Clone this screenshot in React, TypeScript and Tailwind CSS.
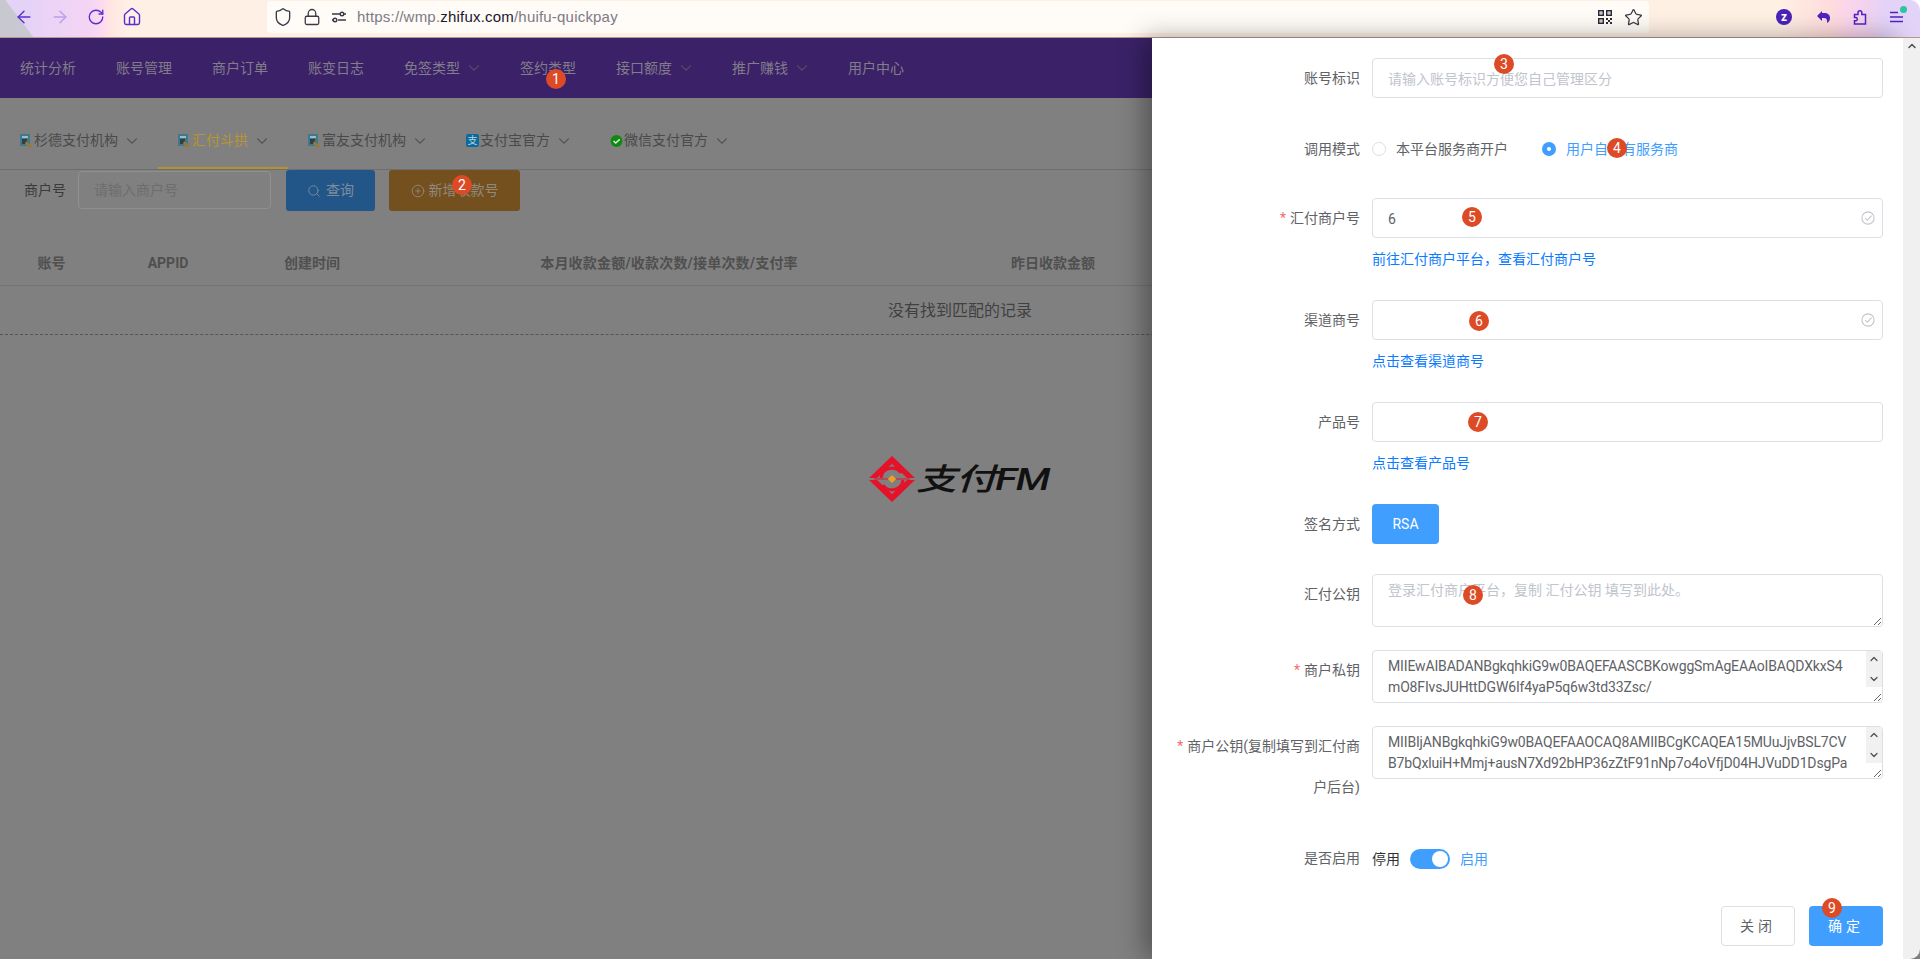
import {
  ArrowLeft,
  ArrowRight,
  ChevronDown,
  ChevronUp,
  CirclePlus,
  House,
  Lock,
  RotateCw,
  Search,
  Shield,
  Star,
} from "lucide-react";
import type { ReactNode } from "react";

const navItems = [
  { label: "统计分析" },
  { label: "账号管理" },
  { label: "商户订单" },
  { label: "账变日志" },
  { label: "免签类型", arrow: true },
  { label: "签约类型" },
  { label: "接口额度", arrow: true },
  { label: "推广赚钱", arrow: true },
  { label: "用户中心" },
];

const badges = [
  { n: 1, pos: "left-[546px] top-[69px]" },
  { n: 2, pos: "left-[452px] top-[175px]" },
  { n: 3, pos: "left-[1494px] top-[54px]" },
  { n: 4, pos: "left-[1607px] top-[138px]" },
  { n: 5, pos: "left-[1462px] top-[207px]" },
  { n: 6, pos: "left-[1469px] top-[311px]" },
  { n: 7, pos: "left-[1468px] top-[412px]" },
  { n: 8, pos: "left-[1463px] top-[585px]" },
  { n: 9, pos: "left-[1822px] top-[898px]" },
];

function TileIcon() {
  return (
    <svg viewBox="0 0 14 14" className="h-[14px] w-[14px] shrink-0">
      <rect x="0" y="0" width="10" height="12" fill="#41788a" />
      <rect x="2" y="2" width="6" height="2" fill="#9fbcc4" />
      <rect x="2" y="5" width="5" height="5" fill="#2f3f45" />
      <path d="M6 7l6 5-2 2-5-4z" fill="#957a38" />
    </svg>
  );
}

function AlipayIcon() {
  return (
    <span className="mr-[1px] flex h-[13px] w-[13px] shrink-0 items-center justify-center rounded-[2px] bg-[#0c6a9c] text-[10px] leading-none text-[#bcd4e0]">
      支
    </span>
  );
}

function WechatIcon() {
  return (
    <svg viewBox="0 0 14 14" className="h-[14px] w-[14px] shrink-0">
      <circle cx="6.5" cy="7" r="6" fill="#0f8a10" />
      <path d="M3.5 7l2.2 2 4-3.6" fill="none" stroke="#d8e8d8" strokeWidth="1.6" />
    </svg>
  );
}

function Chevron({ className }: { className: string }) {
  return <ChevronDown className={"ml-[5px] mr-[-4px] h-[18px] w-[18px] " + className} strokeWidth={1.5} />;
}

function Tab({ icon, label, active }: { icon: ReactNode; label: string; active?: boolean }) {
  return (
    <div
      className={
        "flex h-[71px] items-center pl-5 pr-[21px] pt-4 text-[14px] border-b-2 " +
        (active ? "border-[#b39232] text-[#b8962f]" : "border-transparent text-[#4a4a4a]")
      }
    >
      {icon}
      <span>{label}</span>
      <Chevron className="text-[#555555]" />
    </div>
  );
}

function BrowserBar() {
  return (
    <header className="flex h-[38px] items-start rounded-tr-[10px] border-b border-[#b39a8c] bg-[linear-gradient(53deg,#c8c8d0_26px,transparent_27px),linear-gradient(90deg,#e5d3f7_30px,#f5d4f5_90px,#ffdcee_105px,#ffe6e0_110px,#fff0e6_130px,#fff0e4_1780px,#ffdcdc_1830px,#fad5ec_1850px,#f0d2f0_1870px,#e3d3f8_1885px)]">
      <div className="flex h-[34px] w-[267px] items-center pl-[14px] text-[#5a2fd0]">
        <ArrowLeft className="h-5 w-5" strokeWidth={1.7} />
        <ArrowRight className="ml-4 h-5 w-5 text-[#b9a0ea]" strokeWidth={1.7} />
        <RotateCw className="ml-[17px] h-[18px] w-[18px]" strokeWidth={1.8} />
        <House className="ml-[17px] h-5 w-5" strokeWidth={1.7} />
      </div>
      <div className="mt-px flex h-[32px] w-[1382px] items-center rounded-[4px] bg-[#fffbf7] pl-[6px] text-[#3a3a48]">
        <Shield className="h-5 w-5" strokeWidth={1.6} />
        <Lock className="ml-[10px] h-[18px] w-[18px]" strokeWidth={1.7} />
        <svg viewBox="0 0 16 16" className="ml-[10px] h-4 w-4" fill="none" stroke="currentColor" strokeWidth="1.4">
          <path d="M1 5h8M13 5h2M7 11h8M1 11h1" />
          <circle cx="11" cy="5" r="1.8" />
          <circle cx="4" cy="11" r="1.8" />
        </svg>
        <div className="ml-[10px] font-['Liberation_Sans',sans-serif] text-[15px] tracking-[0.2px] text-[#7d7a86]">
          https://wmp.<span className="text-[#1b1730]">zhifux.com</span>/huifu-quickpay
        </div>
        <div className="ml-auto flex items-center pr-[6px]">
          <svg viewBox="0 0 14 14" className="h-[14px] w-[14px]" fill="#2a2a38">
            <path d="M0 0h6v6H0zM8 0h6v6H8zM0 8h6v6H0z" />
            <path d="M1.5 1.5h3v3h-3zM9.5 1.5h3v3h-3zM1.5 9.5h3v3h-3z" fill="#fffbf7" />
            <path d="M2.5 2.5h1v1h-1zM10.5 2.5h1v1h-1zM2.5 10.5h1v1h-1zM8 8h2v2H8zM12 8h2v2h-2zM10 10h2v2h-2zM8 12h2v2H8zM12 12h2v2h-2z" />
          </svg>
          <Star className="ml-3 h-[19px] w-[19px]" strokeWidth={1.6} />
        </div>
      </div>
      <div className="relative flex h-[34px] flex-1 items-center text-[#4f24c4]">
        <span className="ml-[127px] flex h-4 w-4 items-center justify-center rounded-full bg-[#4b22b8] text-[12px] font-bold leading-none text-white">
          z
        </span>
        <svg viewBox="0 0 14 14" className="ml-6 h-[14px] w-[14px]" fill="currentColor">
          <path d="M6 1 1 6l5 5V8h2c2 0 3 1 3 3v2c2-1 3-3 3-5 0-3-2-5-6-5H6z" />
        </svg>
        <svg viewBox="0 0 16 16" className="ml-[22px] h-4 w-4" fill="none" stroke="currentColor" strokeWidth="1.5">
          <path d="M2.5 5.5h3.5V3.6a1.9 1.9 0 1 1 3.8 0v1.9h3.7v9.5H2.5v-3.2h1.2a1.6 1.6 0 0 0 0-3.2H2.5z" />
        </svg>
        <svg viewBox="0 0 14 12" className="ml-[22px] h-3 w-[14px]" fill="none" stroke="currentColor" strokeWidth="1.5">
          <path d="M0 1.5h8M0 6h13M0 10.5h13" />
        </svg>
        <span className="absolute left-[251px] top-[6px] h-[7px] w-[7px] rounded-full bg-[#2ec4a0]" />
      </div>
    </header>
  );
}

function PageBehind() {
  return (
    <div className="h-full bg-[#808080]">
      <nav className="flex h-[60px] items-center bg-[#3b2268] text-[14px] text-[#827d8a]">
        {navItems.map((item) => (
          <div key={item.label} className={"flex items-center pl-5 " + (item.arrow ? "pr-[21px]" : "pr-5")}>
            <span>{item.label}</span>
            {item.arrow && <Chevron className="text-[#524a68]" />}
          </div>
        ))}
      </nav>

      <div className="flex h-[72px] border-b border-[#6e6e6e]">
        <Tab icon={<TileIcon />} label="杉德支付机构" />
        <Tab icon={<TileIcon />} label="汇付斗拱" active />
        <Tab icon={<TileIcon />} label="富友支付机构" />
        <Tab icon={<AlipayIcon />} label="支付宝官方" />
        <Tab icon={<WechatIcon />} label="微信支付官方" />
      </div>

      <div className="flex h-[60px] items-start pl-6 text-[14px]">
        <label className="mt-[1px] leading-[38px] text-[#3a3a3a]">商户号</label>
        <div className="ml-3 mt-px flex h-[38px] w-[193px] items-center rounded-[4px] border border-[#909090] pl-[15px] text-[#6d6d6d]">
          请输入商户号
        </div>
        <button className="ml-[15px] flex h-[41px] w-[89px] items-center justify-center gap-[5px] rounded-[3px] bg-[#235688] text-[#7f8d9b]">
          <Search className="h-[14px] w-[14px]" strokeWidth={1.5} />
          查询
        </button>
        <button className="ml-[14px] flex h-[41px] w-[131px] items-center justify-center gap-1 rounded-[3px] bg-[#74501f] text-[#918a7c]">
          <CirclePlus className="h-[14px] w-[14px]" strokeWidth={1.5} />
          新增收款号
        </button>
      </div>

      <div className="flex h-[56px] items-center border-b border-[#747474] pt-[11px] text-[14px] font-bold text-[#4f4f4f]">
        <div className="w-[103px] text-center">账号</div>
        <div className="w-[130px] text-center">APPID</div>
        <div className="w-[158px] text-center">创建时间</div>
        <div className="w-[556px] text-center tracking-[0.2px]">本月收款金额/收款次数/接单次数/支付率</div>
        <div className="w-[212px] text-center">昨日收款金额</div>
      </div>
      <div className="h-[49px] border-b border-dashed border-[#555555] pt-[13px] text-center text-[16px] leading-[24px] text-[#404040]">
        没有找到匹配的记录
      </div>
    </div>
  );
}

function Watermark() {
  return (
    <div className="absolute left-[869px] top-[418px] flex items-center">
      <svg viewBox="0 0 46 46" className="h-[46px] w-[46px]">
        <path d="M23 0 46 22H38L23 8 8 22H0Z" fill="#e5122a" />
        <path d="M0 24H8L23 38 38 24H46L23 46Z" fill="#e5122a" />
        <path d="M12 22a11 11 0 0 1 20-5" fill="none" stroke="#e5122a" strokeWidth="3" />
        <path d="M34 24a11 11 0 0 1-20 5" fill="none" stroke="#e5122a" strokeWidth="3" />
        <path d="M5 23h14M27 23h14" stroke="#e5122a" strokeWidth="1" />
        <path d="M23 19l4 4-4 4-4-4z" fill="#f0a020" />
      </svg>
      <div className="ml-px origin-left scale-x-[1.2] scale-y-[0.9] text-[34px] font-medium italic leading-none tracking-[-1px] text-[#111111]">
        支付FM
      </div>
    </div>
  );
}

function FormRow({ label, required, className, children }: { label: ReactNode; required?: boolean; className?: string; children: ReactNode }) {
  return (
    <div className={"flex items-start " + (className ?? "")}>
      <label className="mb-[-1px] w-[208px] shrink-0 text-right leading-[41px] text-[#606266]">
        {required && <span className="mr-[4px] text-[#f56c6c]">*</span>}
        {label}
      </label>
      <div className="ml-3 w-[511px]">{children}</div>
    </div>
  );
}

function TextInput({ placeholder, value, check }: { placeholder?: string; value?: string; check?: boolean }) {
  return (
    <div className="relative">
      <input
        readOnly
        placeholder={placeholder}
        value={value ?? ""}
        className="h-10 w-full rounded-[4px] border border-[#dcdfe6] bg-white px-[15px] pt-px text-[14px] text-[#606266] outline-none placeholder:text-[#c0c4cc]"
      />
      {check && (
        <svg viewBox="0 0 24 24" className="absolute right-[8px] top-[13px] h-[14px] w-[14px] text-[#c0c4cc]" fill="none" stroke="currentColor" strokeWidth="1.8">
          <circle cx="12" cy="12" r="10.5" />
          <path d="M7 12l4 4 7-8" />
        </svg>
      )}
    </div>
  );
}

function KeyArea({ value, placeholder, bar }: { value?: string; placeholder?: string; bar?: boolean }) {
  return (
    <div className="relative h-[53px]">
      <textarea
        readOnly
        wrap="off"
        placeholder={placeholder}
        value={value ?? ""}
        className="h-[53px] w-full resize-y overflow-hidden rounded-[4px] border border-[#dcdfe6] bg-white px-[15px] py-[5px] text-[14px] leading-[21px] tracking-[-0.15px] text-[#606266] outline-none placeholder:text-[#c0c4cc] placeholder:tracking-normal"
      />
      {bar && (
        <div className="absolute right-px top-px flex h-[36px] w-4 flex-col items-center justify-between bg-[#f1f1f1] py-[2px] text-[#505050]">
          <ChevronUp className="h-3 w-3" strokeWidth={2.5} />
          <ChevronDown className="h-3 w-3" strokeWidth={2.5} />
        </div>
      )}
    </div>
  );
}

function LinkRow({ children }: { children: ReactNode }) {
  return <a className="mt-[11px] block h-5 leading-5 text-[#0a7bff]">{children}</a>;
}

function Drawer() {
  return (
    <aside className="absolute bottom-0 left-[1152px] top-0 w-[751px] bg-white pt-5 text-[14px] shadow-[-8px_0_24px_rgba(0,0,0,0.35)]">
      <FormRow label="账号标识">
        <TextInput placeholder="请输入账号标识方便您自己管理区分" />
      </FormRow>

      <FormRow label="调用模式" className="mt-[31px]">
        <div className="flex h-10 items-center">
          <span className="h-[14px] w-[14px] rounded-full border border-[#dcdfe6]" />
          <span className="ml-[10px] text-[#606266]">本平台服务商开户</span>
          <span className="ml-[34px] flex h-[14px] w-[14px] items-center justify-center rounded-full bg-[#409eff]">
            <span className="h-1 w-1 rounded-full bg-white" />
          </span>
          <span className="ml-[10px] text-[#409eff]">用户自己有服务商</span>
        </div>
      </FormRow>

      <FormRow label="汇付商户号" required className="mt-[29px]">
        <TextInput value="6" check />
        <LinkRow>前往汇付商户平台，查看汇付商户号</LinkRow>
      </FormRow>

      <FormRow label="渠道商号" className="mt-[31px]">
        <TextInput check />
        <LinkRow>点击查看渠道商号</LinkRow>
      </FormRow>

      <FormRow label="产品号" className="mt-[31px]">
        <TextInput />
        <LinkRow>点击查看产品号</LinkRow>
      </FormRow>

      <FormRow label="签名方式" className="mt-[31px]">
        <button className="h-10 w-[67px] rounded-[4px] bg-[#409eff] text-white">RSA</button>
      </FormRow>

      <FormRow label="汇付公钥" className="mt-[30px]">
        <KeyArea placeholder="登录汇付商户平台，复制 汇付公钥 填写到此处。" />
      </FormRow>

      <FormRow label="商户私钥" required className="mt-[23px]">
        <KeyArea bar value={"MIIEwAIBADANBgkqhkiG9w0BAQEFAASCBKowggSmAgEAAoIBAQDXkxS4\nmO8FIvsJUHttDGW6If4yaP5q6w3td33Zsc/"} />
      </FormRow>

      <FormRow
        label={
          <>
            商户公钥(复制填写到汇付商
            <br />
            户后台)
          </>
        }
        required
        className="mt-[23px]"
      >
        <KeyArea bar value={"MIIBIjANBgkqhkiG9w0BAQEFAAOCAQ8AMIIBCgKCAQEA15MUuJjvBSL7CV\nB7bQxluiH+Mmj+ausN7Xd92bHP36zZtF91nNp7o4oVfjD04HJVuDD1DsgPa"} />
      </FormRow>

      <FormRow label="是否启用" className="mt-[31px]">
        <div className="flex h-10 items-center pt-[2px]">
          <span className="text-[#303133]">停用</span>
          <span className="ml-[10px] flex h-5 w-10 items-center justify-end rounded-full bg-[#409eff] pr-[2px]">
            <span className="h-4 w-4 rounded-full bg-white" />
          </span>
          <span className="ml-[10px] text-[#409eff]">启用</span>
        </div>
      </FormRow>

      <div className="mt-[28px] flex justify-end gap-[14px] pr-5">
        <button className="h-10 w-[74px] rounded-[4px] border border-[#dcdfe6] bg-white tracking-[4px] text-[#606266]">关闭</button>
        <button className="h-10 w-[74px] rounded-[4px] bg-[#409eff] tracking-[4px] text-white">确定</button>
      </div>
    </aside>
  );
}

export default function App() {
  return (
    <div className="relative h-[959px] w-[1920px] overflow-hidden bg-white font-['Roboto','Noto_Sans_CJK_SC',sans-serif]">
      <BrowserBar />
      <div className="relative h-[921px]">
        <PageBehind />
        <Watermark />
        <Drawer />
        <div className="absolute bottom-0 right-0 top-0 w-[17px] rounded-br-[10px] bg-[#f0f0f0] pt-[2px] text-[#505050]">
          <ChevronUp className="mx-auto h-3 w-3" strokeWidth={3} />
        </div>
      </div>
      {badges.map((b) => (
        <span
          key={b.n}
          className={"absolute flex h-5 w-5 items-center justify-center rounded-full bg-[#dc4a26] text-[14px] leading-none text-white " + b.pos}
        >
          {b.n}
        </span>
      ))}
    </div>
  );
}
